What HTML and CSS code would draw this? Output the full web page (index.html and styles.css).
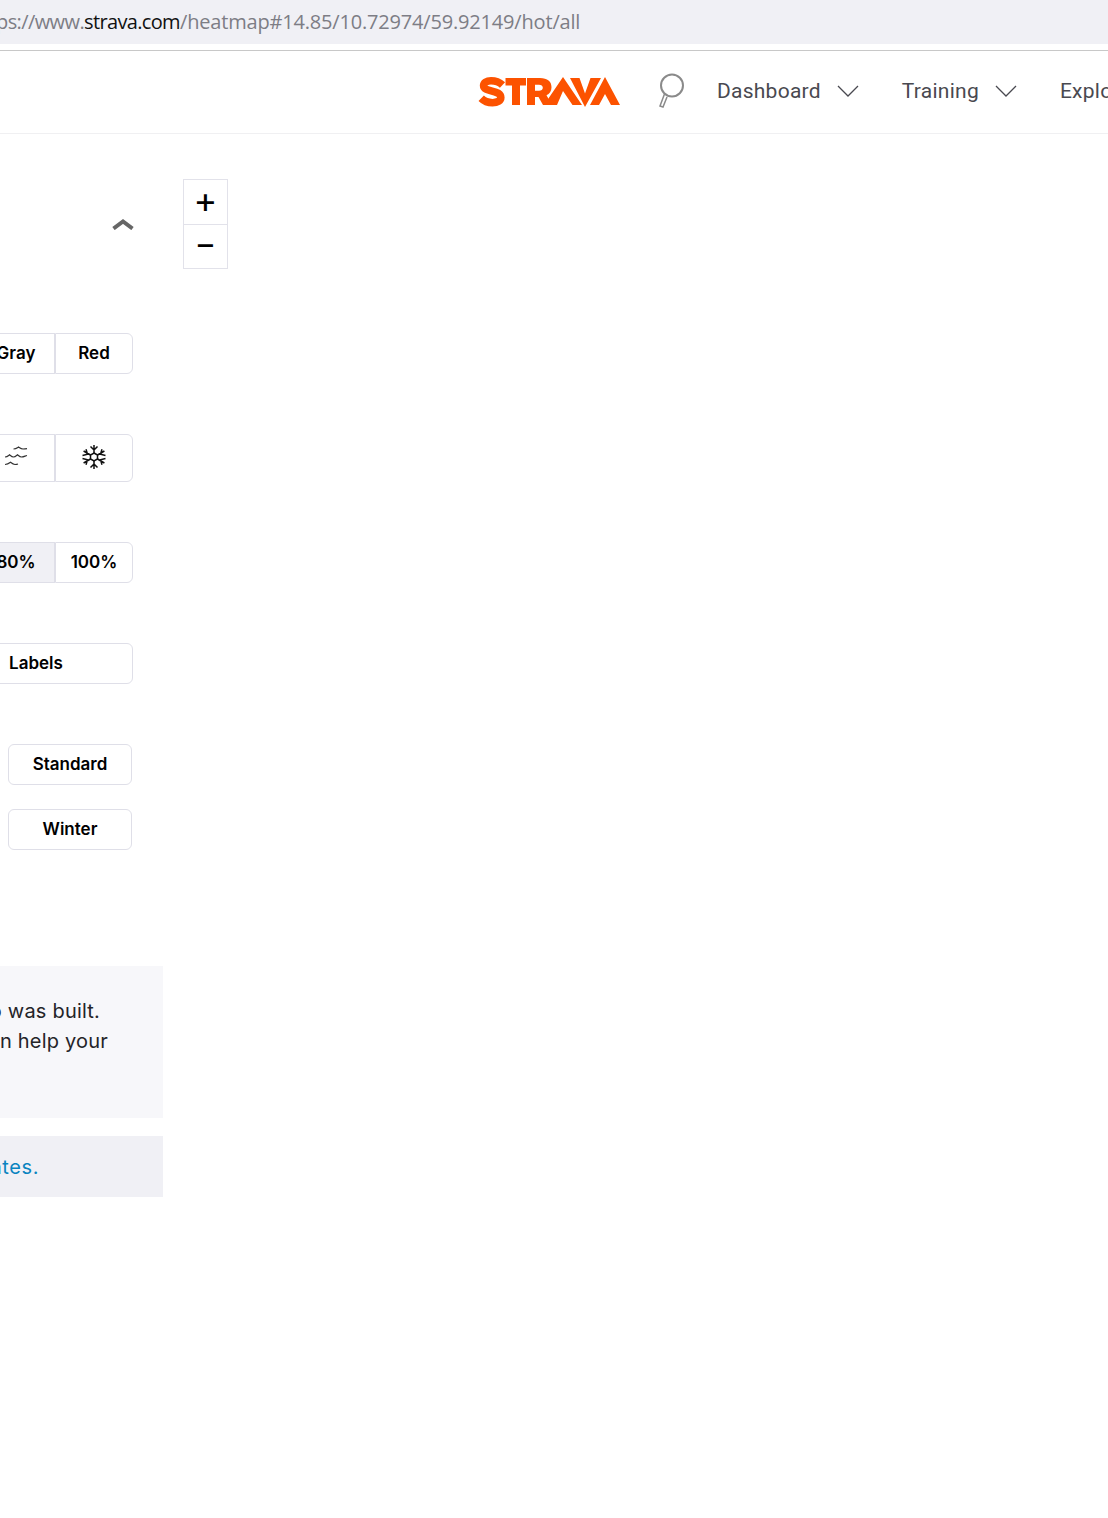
FILE: index.html
```html
<!DOCTYPE html>
<html lang="en">
<head>
<meta charset="utf-8">
<title>Strava Global Heatmap</title>
<link rel="stylesheet" href="styles.css">
</head>
<body>
<div class="urlbar"><span class="url"><span class="scheme">ps://www.</span><span class="host">strava.com</span><span class="path">/heatmap#14.85/10.72974/59.92149/hot/all</span></span></div>
<header class="topnav">
  <svg class="logo" viewBox="0 0 142 30" role="img" aria-label="Strava logo">
    <path class="logo-s" d="M24.500 8C21 4.800 17 3.800 13 3.800 8.500 3.800 5.600 5.800 5.600 8.600 5.600 12 9.500 13 14 14.100 19 15.300 22.800 16.500 22.800 20.500 22.800 23.700 19.500 25.700 14.500 25.700 10.500 25.700 6.200 24.300 3.200 21.300"/>
    <path class="logo-fill" d="M34 8.500H27.500V1H48V8.500H42V28H34Z"/>
    <path class="logo-fill" d="M49 1H62c7.500 0 11.500 3.500 11.500 9.200 0 4-2 6.700-5 8.100L74 28H65l-4.500-8H57v8H49ZM61 13.800c2.300 0 3.800-1 3.800-3s-1.500-3-3.800-3H57v6Z"/>
    <path class="logo-fill" d="M66 28 85 0l19 28H94.500L85 14 79 28Z"/>
    <path class="logo-fill" d="M92 1h9.500L107 16.500 112.500 1H123L107 30Z"/>
    <path class="logo-fill" d="M112 28 127 0l15 28H133l-6-11-6 11Z"/>
  </svg>
  <svg class="search" viewBox="0 0 28 36" aria-hidden="true">
    <circle class="search-ring" cx="15" cy="12.500" r="11"/>
    <path class="search-handle" d="M7.500 21 3 33l3 1 4-10"/>
  </svg>
  <nav class="menu">
    <a class="menu-item">Dashboard<svg class="caret" viewBox="0 0 22 12" aria-hidden="true"><path d="M1 1l10 10L21 1"/></svg></a>
    <a class="menu-item">Training<svg class="caret" viewBox="0 0 22 12" aria-hidden="true"><path d="M1 1l10 10L21 1"/></svg></a>
    <a class="menu-item">Explore</a>
  </nav>
</header>
<main class="stage">
  <aside class="panel">
    <div class="collapse"><svg class="chevron" viewBox="0 0 22 12" aria-hidden="true"><path d="M1.500 10.500 11 3.500l9.500 7"/></svg></div>
    <div class="group">
      <button class="seg">Gray</button><button class="seg">Red</button>
    </div>
    <div class="group">
      <button class="seg tall"><svg class="icon thin" viewBox="0 0 24 24" aria-hidden="true"><path d="M9.500 4C12 4 13 3 14.500 2 16 3 17 4 19 4c1.500 0 3-.2 4-.4M1 12C3 12 4 11 5.500 9.800 7 11 8 12 9.500 12 11 12 12 11 13.500 9.800 15 11 16 12 17.500 12 20 12 21 11 23 10.500M1 19.500C3.500 19.500 5 18.500 6.500 17.300 8 18.500 9.500 19.500 11 19.500c1 0 2-.1 3-.5"/></svg></button>
      <button class="seg tall"><svg class="icon" viewBox="0 0 24 24" aria-hidden="true"><path d="M12 0v8M12 16v8M1.600 6l6.900 4M15.500 14l6.900 4M1.600 18l6.900-4M15.500 10l6.900-4M8.500 1.500 12 5l3.500-3.500M8.500 22.500 12 19l3.500 3.500M.5 10.500l5-1.200-1.500-5M23.500 13.500l-5 1.200 1.500 5M.5 13.500l5 1.200-1.500 5M23.500 10.500l-5-1.200 1.500-5"/><path d="M12 8l3.500 2v4L12 16l-3.500-2v-4Z"/></svg></button>
    </div>
    <div class="group">
      <button class="seg active">80%</button><button class="seg">100%</button>
    </div>
    <div class="group"><button class="seg wide">Labels</button></div>
    <div class="stack">
      <button class="solo">Standard</button>
      <button class="solo">Winter</button>
    </div>
    <section class="note">
      <span class="line first">o was built.</span>
      <span class="line second">n help your</span>
    </section>
    <section class="updates"><a class="link">ates.</a></section>
  </aside>
  <div class="map">
    <div class="zoom">
      <button class="zoom-btn plus">+</button>
      <button class="zoom-btn minus">&minus;</button>
    </div>
  </div>
</main>
</body>
</html>
```
FILE: styles.css
```css
* { box-sizing: border-box; }
html, body { margin: 0; padding: 0; height: 100%; overflow: hidden; background: #fff; }
body { font-family: Inter, "Noto Sans", sans-serif; color: #000; }

.urlbar { height: 44px; background: #f0f0f5; display: flex; align-items: center; overflow: hidden; margin-bottom: 6px; padding-bottom: 2px; }
.url { font-family: "Open Sans", "Noto Sans", sans-serif; font-size: 20px; color: #7d7d85; white-space: nowrap; margin-left: -4px; }
.scheme { letter-spacing: -0.6px; }
.host { letter-spacing: -0.65px; color: #111; }
.path { letter-spacing: -0.18px; }

.topnav { height: 84px; border-top: 1px solid #c8c8c8; border-bottom: 1px solid #f0f0f2; display: flex; align-items: center; padding-left: 478px; overflow: hidden; white-space: nowrap; }
.logo { width: 142px; height: 30px; flex: none; display: block; }
.logo-fill { fill: #fc5200; }
.logo-s { fill: none; stroke: #fc5200; stroke-width: 7.600; }
.search { width: 28px; height: 36px; margin: 0 0 2px 37px; flex: none; }
.search-ring { fill: none; stroke: #8a8a8a; stroke-width: 2; }
.search-handle { fill: none; stroke: #8a8a8a; stroke-width: 1.500; }
.menu { display: flex; margin: 0 0 2px 32px; flex: none; }
.menu-item { display: flex; align-items: center; font-size: 21px; font-family: Roboto, Inter, sans-serif; letter-spacing: .25px; color: #494950; margin-right: 43px; }
.caret { width: 22px; height: 12px; margin-left: 16px; fill: none; stroke: #494950; stroke-width: 1.300; }

.stage { display: flex; }
.panel { width: 163px; flex: none; display: flex; flex-direction: column; align-items: flex-end; padding-top: 84px; }
.collapse { width: 163px; padding-left: 112px; height: 115px; }
.chevron { width: 22px; height: 12px; display: block; fill: none; stroke: #666; stroke-width: 4; }

.group { width: 133px; margin: 0 30px 60px 0; display: flex; justify-content: flex-end; flex: none; }
.seg { width: 78px; height: 41px; flex: none; border: 1px solid #dfdfe8; background: #fff; font: 600 17px Inter, sans-serif; color: #000; padding: 0 0 2px; display: flex; align-items: center; justify-content: center; }
.seg:last-child { border-radius: 0 6px 6px 0; }
.seg.tall { height: 48px; }
.seg.active { background: #f0f0f5; }
.seg.wide { width: 194px; }
.icon { width: 24px; height: 24px; fill: none; stroke: #111; stroke-width: 1.500; }
.icon.thin { stroke-width: 1.200; stroke: #333; }

.stack { width: 163px; padding: 0 31px 0 8px; display: flex; flex-direction: column; gap: 24px; margin-bottom: 116px; }
.solo { height: 41px; border: 1px solid #dfdfe8; border-radius: 6px; background: #fff; font: 600 17px Inter, sans-serif; color: #000; padding: 0 0 2px; }

.note { width: 163px; height: 152px; background: #f7f7fa; padding-top: 30px; margin-bottom: 18px; font-size: 20px; line-height: 30px; color: #242428; overflow: hidden; white-space: nowrap; letter-spacing: .2px; }
.line { display: block; text-align: right; margin-left: -40px; }
.line.first { padding-right: 63px; }
.line.second { padding-right: 55px; }
.updates { width: 163px; height: 61px; background: #f0f0f5; display: flex; align-items: center; justify-content: flex-end; overflow: hidden; font-size: 20px; }
.link { color: #0a84c0; letter-spacing: .6px; padding-right: 124px; white-space: nowrap; flex: none; }

.map { flex: 1; padding: 45px 0 0 20px; }
.zoom { width: 45px; border: 1px solid #e2e2ea; display: flex; flex-direction: column; }
.zoom-btn { background: #fff; border: 0; font: 400 36px/1 Inter, sans-serif; color: #000; display: flex; align-items: center; justify-content: center; overflow: hidden; }
.zoom-btn.plus { height: 45px; border-bottom: 1px solid #e2e2ea; padding: 0 0 4px; }
.zoom-btn.minus { height: 43px; padding: 0 0 6px; font-size: 33px; }
```
